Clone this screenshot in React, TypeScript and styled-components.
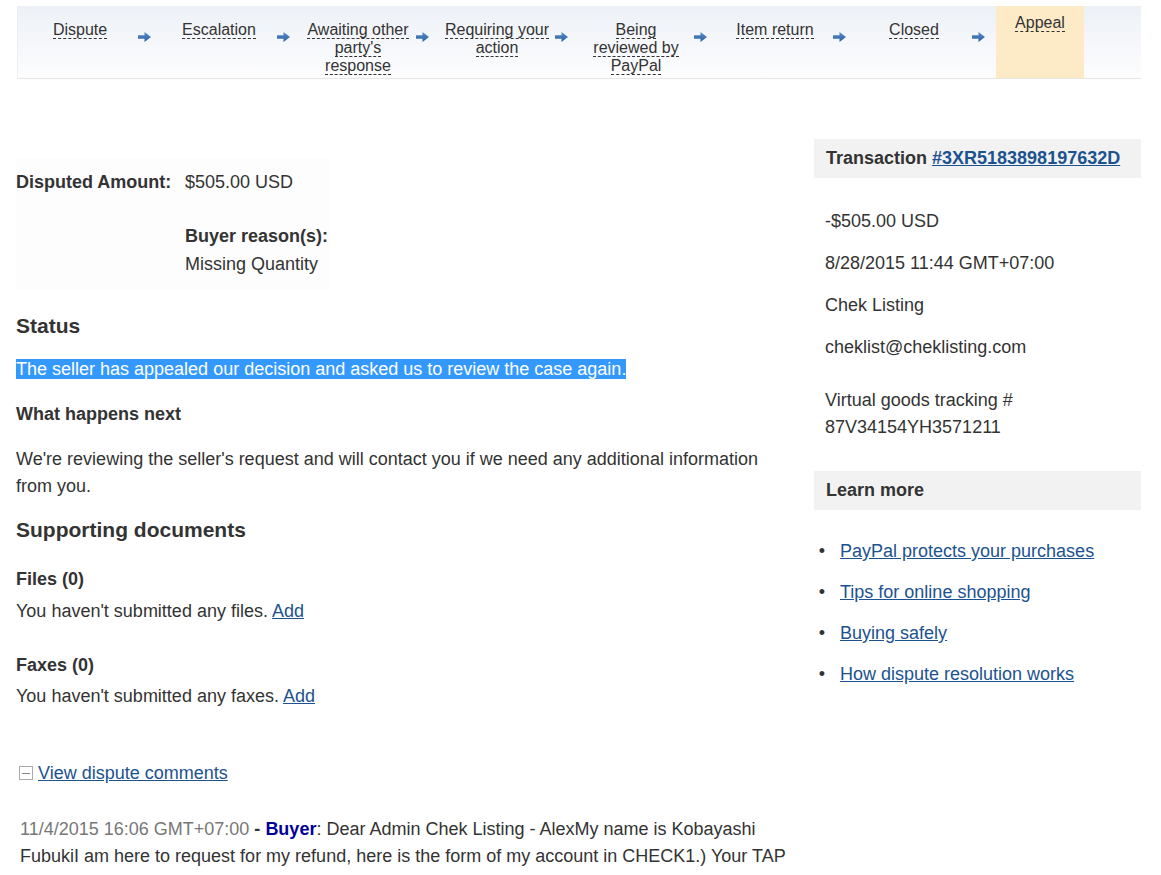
import styled, { createGlobalStyle } from "styled-components";

const GlobalStyle = createGlobalStyle`
  html, body {
    margin: 0;
    padding: 0;
    background: #fff;
  }
  body {
    font-family: "Liberation Sans", Arial, sans-serif;
    font-size: 18px;
    color: #333;
  }
`;

const Page = styled.div`
  width: 1125px;
  padding: 6px 16px 0 16px;
`;

const StepBar = styled.div`
  display: flex;
  height: 72px;
  margin-left: 1px;
  padding-left: 5px;
  background: linear-gradient(#edf1f7, #fdfdfe);
  border-left: 1px solid #eceef1;
  border-bottom: 1px solid #e6e6e6;
  font-size: 16px;
`;

const Step = styled.div<{ $active?: boolean }>`
  width: ${(p) => (p.$active ? "88px" : "114px")};
  flex: none;
  text-align: center;
  line-height: 18px;
  padding-top: ${(p) => (p.$active ? "8px" : "15px")};
  background: ${(p) => (p.$active ? "#fdebc8" : "transparent")};
  color: #333;
`;

const StepLabel = styled.span`
  border-bottom: 1px dashed #333;
`;

const ArrowCell = styled.div`
  width: 25px;
  flex: none;
  padding-top: 22px;
  padding-left: 1px;
  box-sizing: border-box;
`;

const Columns = styled.div`
  display: flex;
  gap: 20px;
`;

const MainColumn = styled.div`
  width: 778px;
  flex: none;
`;

const SideColumn = styled.div`
  width: 327px;
  flex: none;
  padding-top: 60px;
`;

const AmountBox = styled.div`
  margin-top: 79px;
  width: 314px;
  padding: 10px 0 12px 0;
  background: #fdfdfd;
  display: grid;
  grid-template-columns: 169px 1fr;
  line-height: 28px;
  white-space: nowrap;
`;

const AmountLabel = styled.div`
  font-weight: bold;
`;

const ReasonBlock = styled.div`
  grid-column: 2;
  margin-top: 26px;
`;

const Heading = styled.h2<{ $top: number }>`
  margin: ${(p) => p.$top}px 0 0 0;
  font-size: 21px;
  line-height: 24px;
  font-weight: bold;
`;

const SubHeading = styled.div<{ $top: number }>`
  margin-top: ${(p) => p.$top}px;
  font-weight: bold;
  line-height: 20px;
`;

const Text = styled.p<{ $top: number; $lh?: number }>`
  margin: ${(p) => p.$top}px 0 0 0;
  line-height: ${(p) => p.$lh ?? 28}px;
`;

const Selected = styled.span`
  background: #3399ff;
  color: #fff;
`;

const Link = styled.a<{ $bold?: boolean }>`
  color: #1c5290;
  text-decoration: underline;
  font-weight: ${(p) => (p.$bold ? "bold" : "normal")};
  cursor: pointer;
`;

const ToggleRow = styled.div`
  margin-top: 53px;
  display: flex;
  align-items: center;
  gap: 5px;
  padding-left: 3px;
  line-height: 20px;
`;

const ToggleBox = styled.span`
  width: 12px;
  height: 12px;
  border: 1px solid #aaa;
  display: flex;
  align-items: center;
  justify-content: center;
  &::after {
    content: "";
    width: 8px;
    height: 1px;
    background: #888;
  }
`;

const Comment = styled.p`
  margin: 33px 0 0 0;
  padding-left: 4px;
  line-height: 27px;
`;

const CommentDate = styled.span`
  color: #777;
`;

const Strong = styled.b<{ $color?: string }>`
  color: ${(p) => p.$color ?? "#333"};
`;

const SideHeader = styled.div<{ $top?: number }>`
  margin-top: ${(p) => p.$top ?? 0}px;
  height: 39px;
  padding: 0 12px;
  background: #f2f2f2;
  display: flex;
  align-items: center;
  font-weight: bold;
  gap: 5px;
`;

const InfoList = styled.div`
  margin-top: 22px;
  padding-left: 11px;
`;

const InfoRow = styled.div`
  line-height: 42px;
`;

const Tracking = styled.div`
  margin-top: 19px;
  padding-left: 11px;
  line-height: 27px;
`;

const LinkList = styled.ul`
  margin: 21px 0 0 0;
  padding-left: 26px;
  list-style-type: "•\u00a0\u00a0\u00a0";
  line-height: 41px;

  li::marker {
    color: #333;
  }
`;

const steps = [
  ["Dispute"],
  ["Escalation"],
  ["Awaiting other", "party's", "response"],
  ["Requiring your", "action"],
  ["Being", "reviewed by", "PayPal"],
  ["Item return"],
  ["Closed"],
];

const learnLinks = [
  "PayPal protects your purchases",
  "Tips for online shopping",
  "Buying safely",
  "How dispute resolution works",
];

const StepArrow = () => (
  <svg width="13" height="10" viewBox="0 0 13 10">
    <defs>
      <linearGradient id="arr" x1="0" y1="0" x2="0" y2="1">
        <stop offset="0" stopColor="#5a8fcb" />
        <stop offset="1" stopColor="#2a5f9e" />
      </linearGradient>
    </defs>
    <path d="M0 3.2 H6.5 V0 L13 5 L6.5 10 V6.8 H0 Z" fill="url(#arr)" />
  </svg>
);

const StepLines = ({ lines }: { lines: string[] }) => (
  <>
    {lines.map((l, i) => (
      <span key={l}>
        <StepLabel>{l}</StepLabel>
        {i < lines.length - 1 && <br />}
      </span>
    ))}
  </>
);

export default function App() {
  return (
    <>
      <GlobalStyle />
      <Page>
        <StepBar>
          {steps.map((s) => (
            <div key={s[0]} style={{ display: "contents" }}>
              <Step>
                <StepLines lines={s} />
              </Step>
              <ArrowCell>
                <StepArrow />
              </ArrowCell>
            </div>
          ))}
          <Step $active>
            <StepLabel>Appeal</StepLabel>
          </Step>
        </StepBar>

        <Columns>
          <MainColumn>
            <AmountBox>
              <AmountLabel>Disputed Amount:</AmountLabel>
              <div>$505.00 USD</div>
              <ReasonBlock>
                <AmountLabel>Buyer reason(s):</AmountLabel>
                <div>Missing Quantity</div>
              </ReasonBlock>
            </AmountBox>

            <Heading $top={24}>Status</Heading>
            <Text $top={21} $lh={20}>
              <Selected>
                The seller has appealed our decision and asked us to review the
                case again.
              </Selected>
            </Text>

            <SubHeading $top={25}>What happens next</SubHeading>
            <Text $top={22} $lh={27}>
              We're reviewing the seller's request and will contact you if we
              need any additional information from you.
            </Text>

            <Heading $top={18}>Supporting documents</Heading>
            <SubHeading $top={27}>Files (0)</SubHeading>
            <Text $top={8}>
              You haven't submitted any files. <Link>Add</Link>
            </Text>
            <SubHeading $top={30}>Faxes (0)</SubHeading>
            <Text $top={7}>
              You haven't submitted any faxes. <Link>Add</Link>
            </Text>

            <ToggleRow>
              <ToggleBox />
              <Link>View dispute comments</Link>
            </ToggleRow>

            <Comment>
              <CommentDate>11/4/2015 16:06 GMT+07:00</CommentDate>{" "}
              <Strong>-</Strong> <Strong $color="#000099">Buyer</Strong>: Dear
              Admin Chek Listing - AlexMy name is Kobayashi FubukiI am here to
              request for my refund, here is the form of my account in CHECK1.)
              Your TAP
            </Comment>
          </MainColumn>

          <SideColumn>
            <SideHeader>
              Transaction <Link $bold>#3XR5183898197632D</Link>
            </SideHeader>
            <InfoList>
              <InfoRow>-$505.00 USD</InfoRow>
              <InfoRow>8/28/2015 11:44 GMT+07:00</InfoRow>
              <InfoRow>Chek Listing</InfoRow>
              <InfoRow>cheklist@cheklisting.com</InfoRow>
            </InfoList>
            <Tracking>
              Virtual goods tracking #
              <br />
              87V34154YH3571211
            </Tracking>

            <SideHeader $top={30}>Learn more</SideHeader>
            <LinkList>
              {learnLinks.map((l) => (
                <li key={l}>
                  <Link>{l}</Link>
                </li>
              ))}
            </LinkList>
          </SideColumn>
        </Columns>
      </Page>
    </>
  );
}
